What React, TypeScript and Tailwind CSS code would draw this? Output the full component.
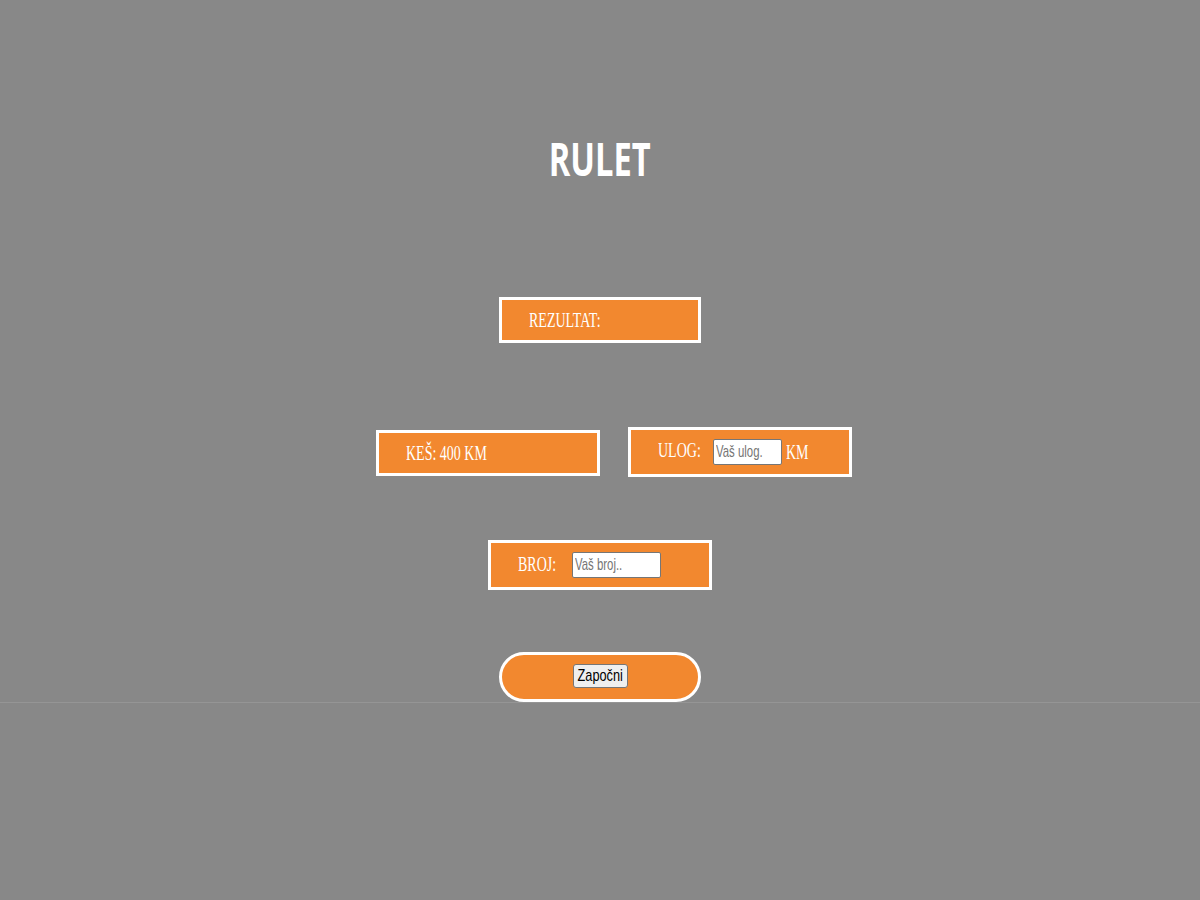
import React from "react";

const serif = { fontFamily: '"Liberation Serif", "Times New Roman", serif' };
const sans = { fontFamily: '"Liberation Sans", Arial, sans-serif' };

function Sx({ w, children }: { w: number; children: React.ReactNode }) {
  return (
    <span className="inline-block whitespace-nowrap overflow-visible" style={{ width: w }}>
      <span className="inline-block origin-left scale-x-[0.7]">{children}</span>
    </span>
  );
}

function Field({ w, ph }: { w: number; ph: string }) {
  return (
    <div
      className="h-[26px] bg-white border border-[#767676] rounded-[2px] overflow-hidden shrink-0 flex items-center"
      style={{ width: w }}
    >
      <input
        type="text"
        placeholder={ph}
        className="block h-[24px] origin-left scale-x-[0.67] pl-[3px] text-[17px] text-black placeholder:text-[#757575] outline-none bg-transparent"
        style={{ ...sans, width: w / 0.67 }}
      />
    </div>
  );
}

export default function App() {
  return (
    <div className="min-h-[900px] w-full bg-[#888888]">
      <div className="flex flex-col items-center w-full">
        <div className="pt-[135px] h-[189px] w-full flex justify-center">
          <h1
            className="text-[46px] font-bold leading-none text-white origin-center scale-x-[0.71] m-0"
            style={{ fontFamily: '"Open Sans", "Noto Sans", sans-serif' }}
          >
            RULET
          </h1>
        </div>

        <div
          className="mt-[108px] w-[202px] h-[46px] bg-[#f2882f] border-[3px] border-white flex items-center pl-[27px] text-[20px] text-white"
          style={serif}
        >
          <Sx w={80}>REZULTAT:</Sx>
        </div>

        <div className="mt-[84px] w-full pl-[28px] flex justify-center items-center gap-[28px]">
          <div
            className="w-[224px] h-[46px] mt-[2px] bg-[#f2882f] border-[3px] border-white flex items-center pl-[27px] text-[20px] text-white"
            style={serif}
          >
            <Sx w={90}>KEŠ: 400 KM</Sx>
          </div>
          <div
            className="w-[224px] h-[50px] bg-[#f2882f] border-[3px] border-white flex items-center pl-[27px] text-[20px] text-white"
            style={serif}
          >
            <Sx w={44}>
              <span className="relative top-[-2px]">ULOG:</span>
            </Sx>
            <div className="ml-[11px]">
              <Field w={69} ph="Vaš ulog." />
            </div>
            <span className="ml-[4px]">
              <Sx w={24}>KM</Sx>
            </span>
          </div>
        </div>

        <div
          className="mt-[63px] w-[224px] h-[50px] bg-[#f2882f] border-[3px] border-white flex items-center pl-[27px] text-[20px] text-white"
          style={serif}
        >
          <Sx w={38}>
            <span className="relative top-[-1px]">BROJ:</span>
          </Sx>
          <div className="ml-[16px]">
            <Field w={89} ph="Vaš broj.." />
          </div>
        </div>

        <div className="mt-[62px] w-[202px] h-[50px] bg-[#f2882f] border-[3px] border-white rounded-full flex items-center justify-center">
          <button
            className="w-[55px] h-[24px] mt-[-3px] bg-[#efefef] border border-[#767676] rounded-[3px] flex items-center justify-center text-[17px] text-black leading-none"
            style={sans}
          >
            <span className="inline-block scale-x-[0.75] whitespace-nowrap">Započni</span>
          </button>
        </div>
      </div>
      <div className="w-full h-[1px] bg-[#959595]" />
    </div>
  );
}
